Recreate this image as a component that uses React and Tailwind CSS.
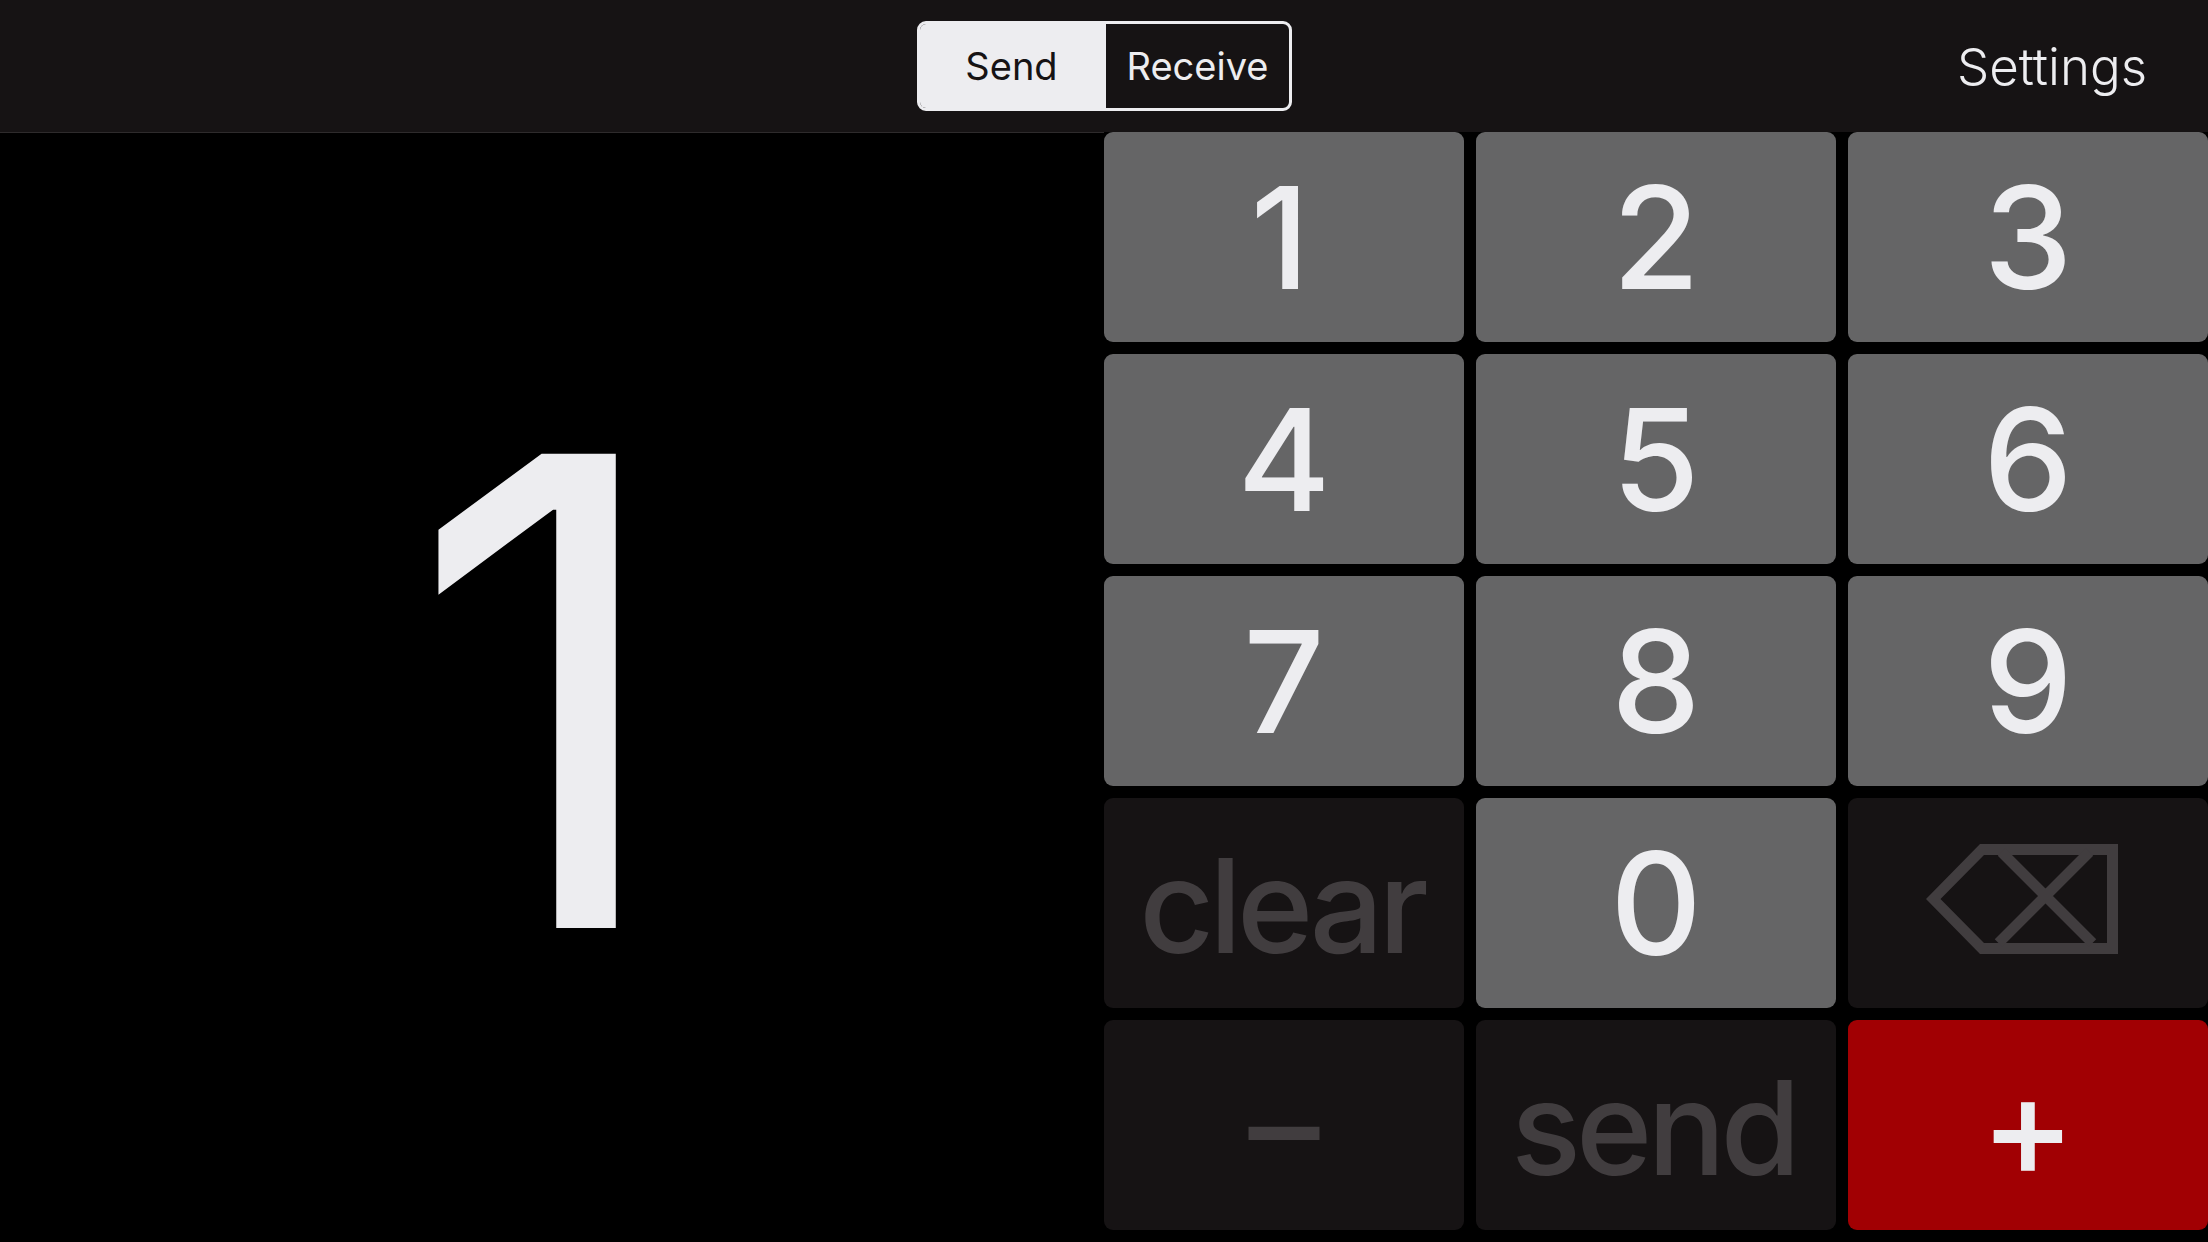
const font = "font-['Inter',sans-serif]"

function Key({ label, variant = "digit", word = false, className = "" }) {
    const colors = {
        digit: "bg-[#656566] text-[#ededf0]",
        dim: "bg-[#161314] text-[#413d3f]",
        red: "bg-[#a10003] text-[#ededf0]",
    }
    const size = word ? "pt-[6px] text-[130px] tracking-[-5px] font-medium" : "text-[142px] font-medium"
    return (
        <button className={`flex items-center justify-center rounded-[9px] leading-none ${size} ${colors[variant]} ${className}`}>
            {label}
        </button>
    )
}

function BackspaceIcon() {
    return (
        <svg className="mr-[12px] mb-[9px]" width="192" height="110" viewBox="0 0 192 110" fill="#413d3f">
            <path fillRule="evenodd" d="M0 55 L54 0 H192 V110 H54 Z M14.5 55 L58 11 H181 V99 H58 Z" />
            <path d="M75.5 8 L166.5 99 M163.5 8 L72.5 99" stroke="#413d3f" strokeWidth="10.6" fill="none" />
        </svg>
    )
}

export default function App() {
    return (
        <div className={`flex flex-col w-[2208px] h-[1242px] bg-black overflow-hidden ${font}`}>
            {/* HEADER */}
            <header className="relative flex items-center justify-end h-[132px] shrink-0 pr-[61px] bg-[#161314]">
                <div className="absolute left-[917px] top-[21px] flex w-[375px] h-[90px] rounded-[9px] border-[3px] border-[#ededf0] overflow-hidden text-[38px]">
                    <div className="flex items-center justify-center w-[186px] pr-[3px] bg-[#ededf0] text-[#161314]">Send</div>
                    <div className="flex items-center justify-center flex-1 text-[#ededf0]">Receive</div>
                </div>
                <span className="pt-[2px] text-[51px] font-light text-[#ededf0]">Settings</span>
            </header>

            <main className="flex flex-1 min-h-0">
                {/* AMOUNT */}
                <div className="flex items-center justify-center w-[1104px] shrink-0 pr-[23px] pt-[6px] border-t border-[#2e2b2c] text-[652px] leading-none text-[#ededf0]">
                    1
                </div>

                {/* KEYPAD */}
                <div className="grid flex-1 grid-cols-3 grid-rows-5 gap-[12px] pb-[12px]">
                    <Key label="1" className="pr-[8px]" />
                    <Key label="2" />
                    <Key label="3" />
                    <Key label="4" />
                    <Key label="5" />
                    <Key label="6" />
                    <Key label="7" />
                    <Key label="8" />
                    <Key label="9" />
                    <Key label="clear" variant="dim" word className="pr-[5px]" />
                    <Key label="0" />
                    <Key label={<BackspaceIcon />} variant="dim" />
                    <Key label="–" variant="dim" />
                    <Key label="send" variant="dim" word className="pr-[5px]" />
                    <Key label="+" variant="red" />
                </div>
            </main>
        </div>
    )
}
